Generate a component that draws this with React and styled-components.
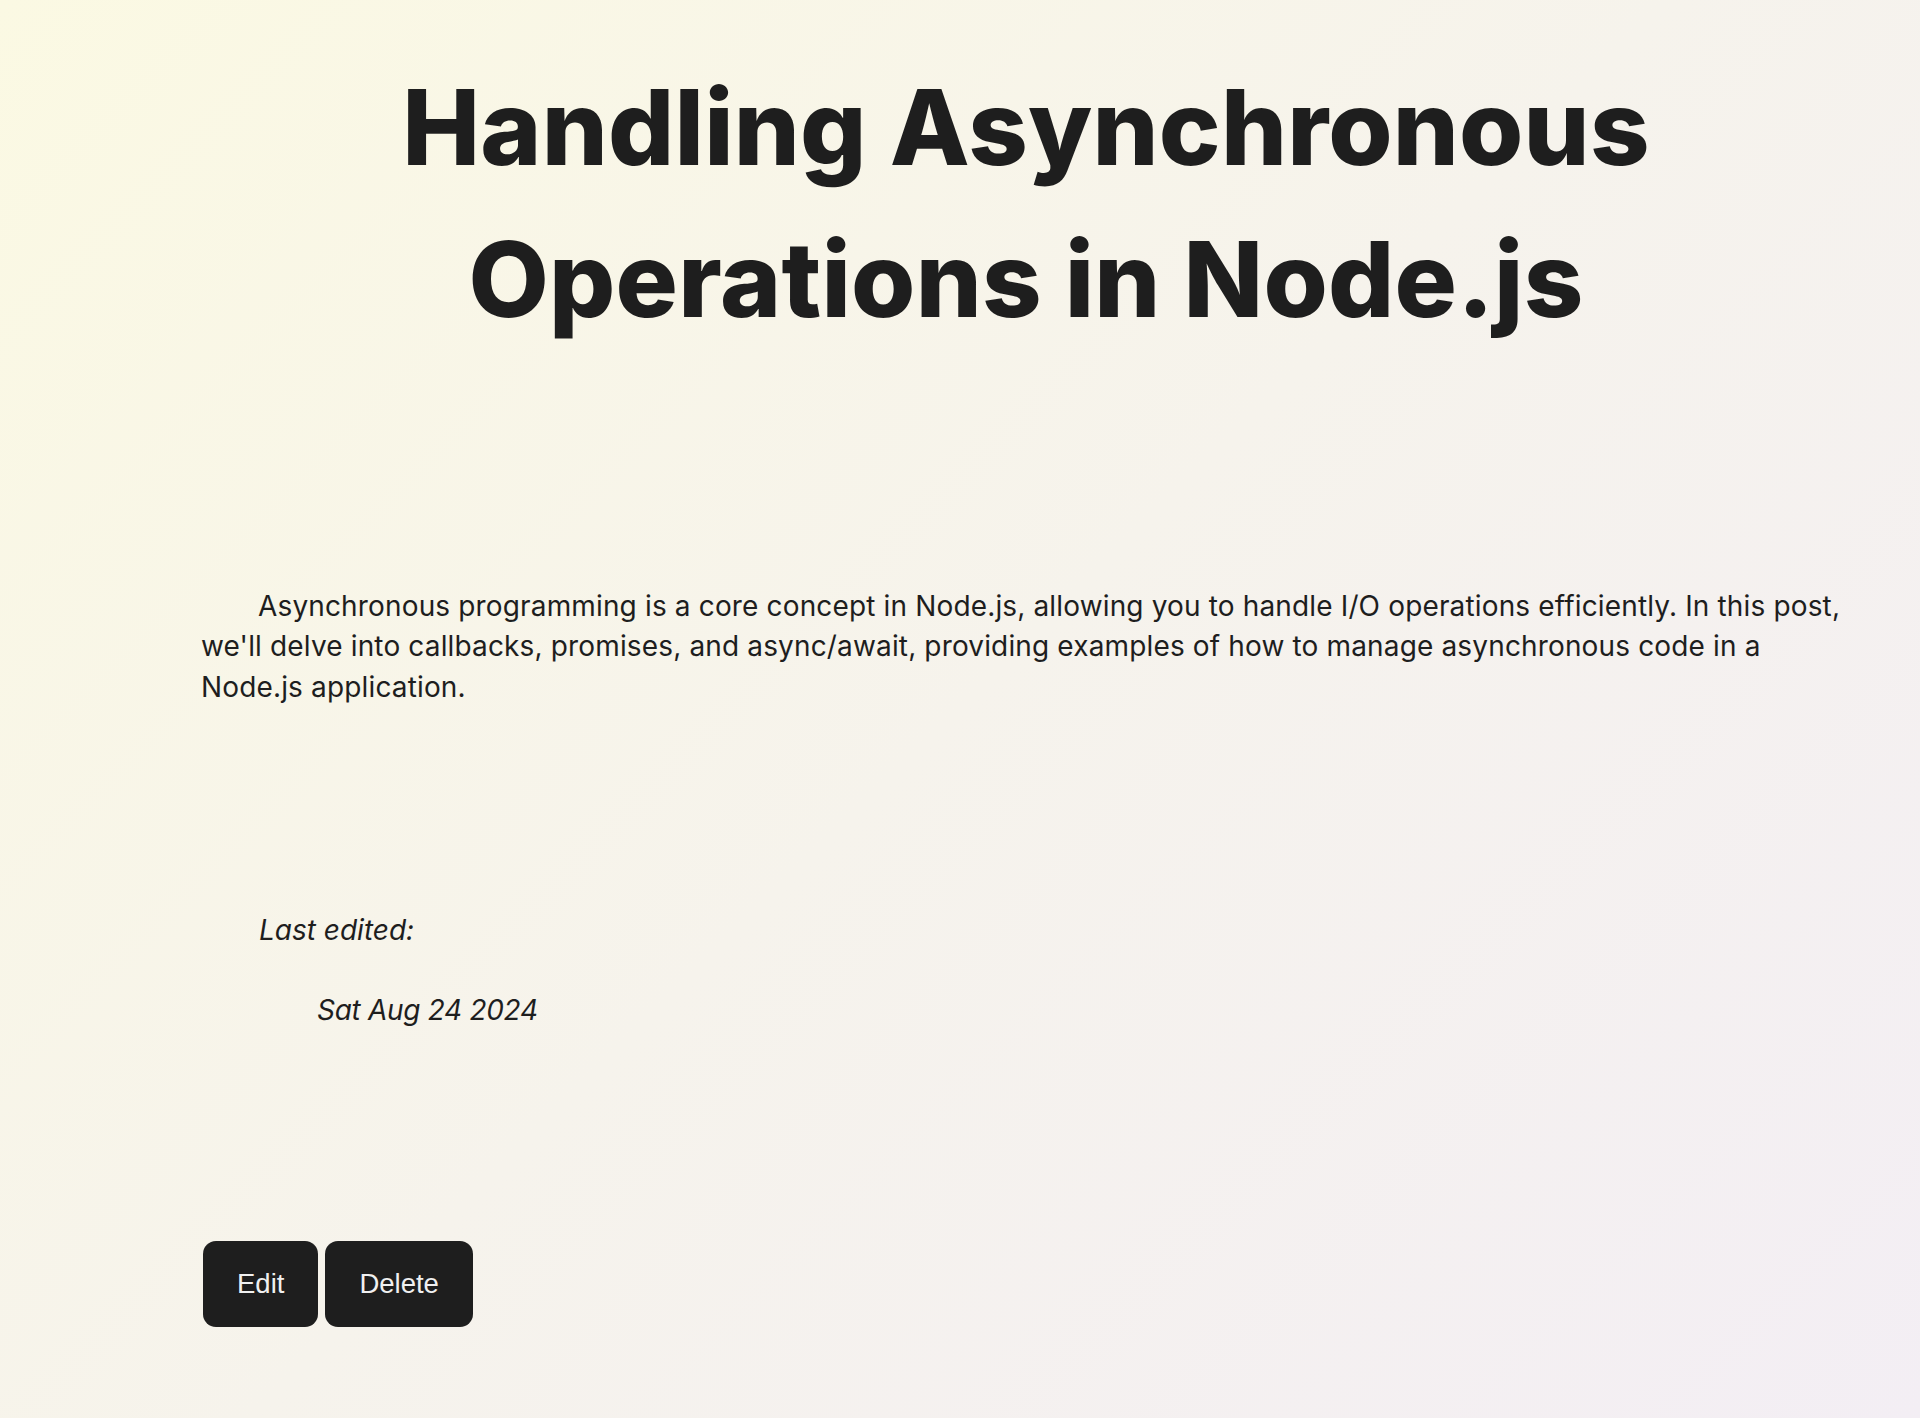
import styled, { createGlobalStyle } from 'styled-components'

const GlobalStyle = createGlobalStyle`
  html, body {
    margin: 0;
    padding: 0;
  }
  body {
    min-height: 1418px;
    background: linear-gradient(135deg, #fbf9e3 0%, #f6f3ec 50%, #f3eef4 100%);
    font-family: Inter, "Open Sans", sans-serif;
    color: #1e1e1e;
  }
`

const Page = styled.main`
  box-sizing: border-box;
  width: 1920px;
  min-height: 1418px;
  padding: 51px 69px 0 201px;
`

const Title = styled.h1`
  margin: 0;
  text-align: center;
  font-size: 104px;
  line-height: 152px;
  font-weight: 800;
  letter-spacing: 0.2px;
  color: #1e1e1e;
`

const Body = styled.p`
  margin: 231px 0 0;
  font-size: 28px;
  line-height: 40.4px;
  letter-spacing: 0.15px;
  text-indent: 57px;
  color: #1e1e1e;
`

const Meta = styled.div`
  margin-top: 203px;
  padding-left: 58px;
  font-style: italic;
  font-size: 28px;
  line-height: 40px;
`

const MetaLabel = styled.p`
  margin: 0;
`

const MetaDate = styled.p`
  margin: 40px 0 0 58px;
  letter-spacing: -0.3px;
`

const Actions = styled.div`
  display: flex;
  gap: 7px;
  margin: 211px 0 0 2px;
`

const Button = styled.button`
  display: flex;
  align-items: center;
  justify-content: center;
  height: 86px;
  padding: 0 34px;
  border: none;
  border-radius: 13px;
  background: #1e1e1e;
  color: #f0f0f0;
  font-family: "Liberation Sans", Arial, sans-serif;
  font-size: 27.5px;
  cursor: pointer;
`

export default function App() {
  return (
    <>
      <GlobalStyle />
      <Page>
        <Title>Handling Asynchronous Operations in Node.js</Title>
        <Body>
          Asynchronous programming is a core concept in Node.js, allowing you to handle I/O operations efficiently. In this post, we'll delve into callbacks, promises, and async/await, providing examples of how to manage asynchronous code in a Node.js application.
        </Body>
        <Meta>
          <MetaLabel>Last edited:</MetaLabel>
          <MetaDate>Sat Aug 24 2024</MetaDate>
        </Meta>
        <Actions>
          <Button>Edit</Button>
          <Button>Delete</Button>
        </Actions>
      </Page>
    </>
  )
}
